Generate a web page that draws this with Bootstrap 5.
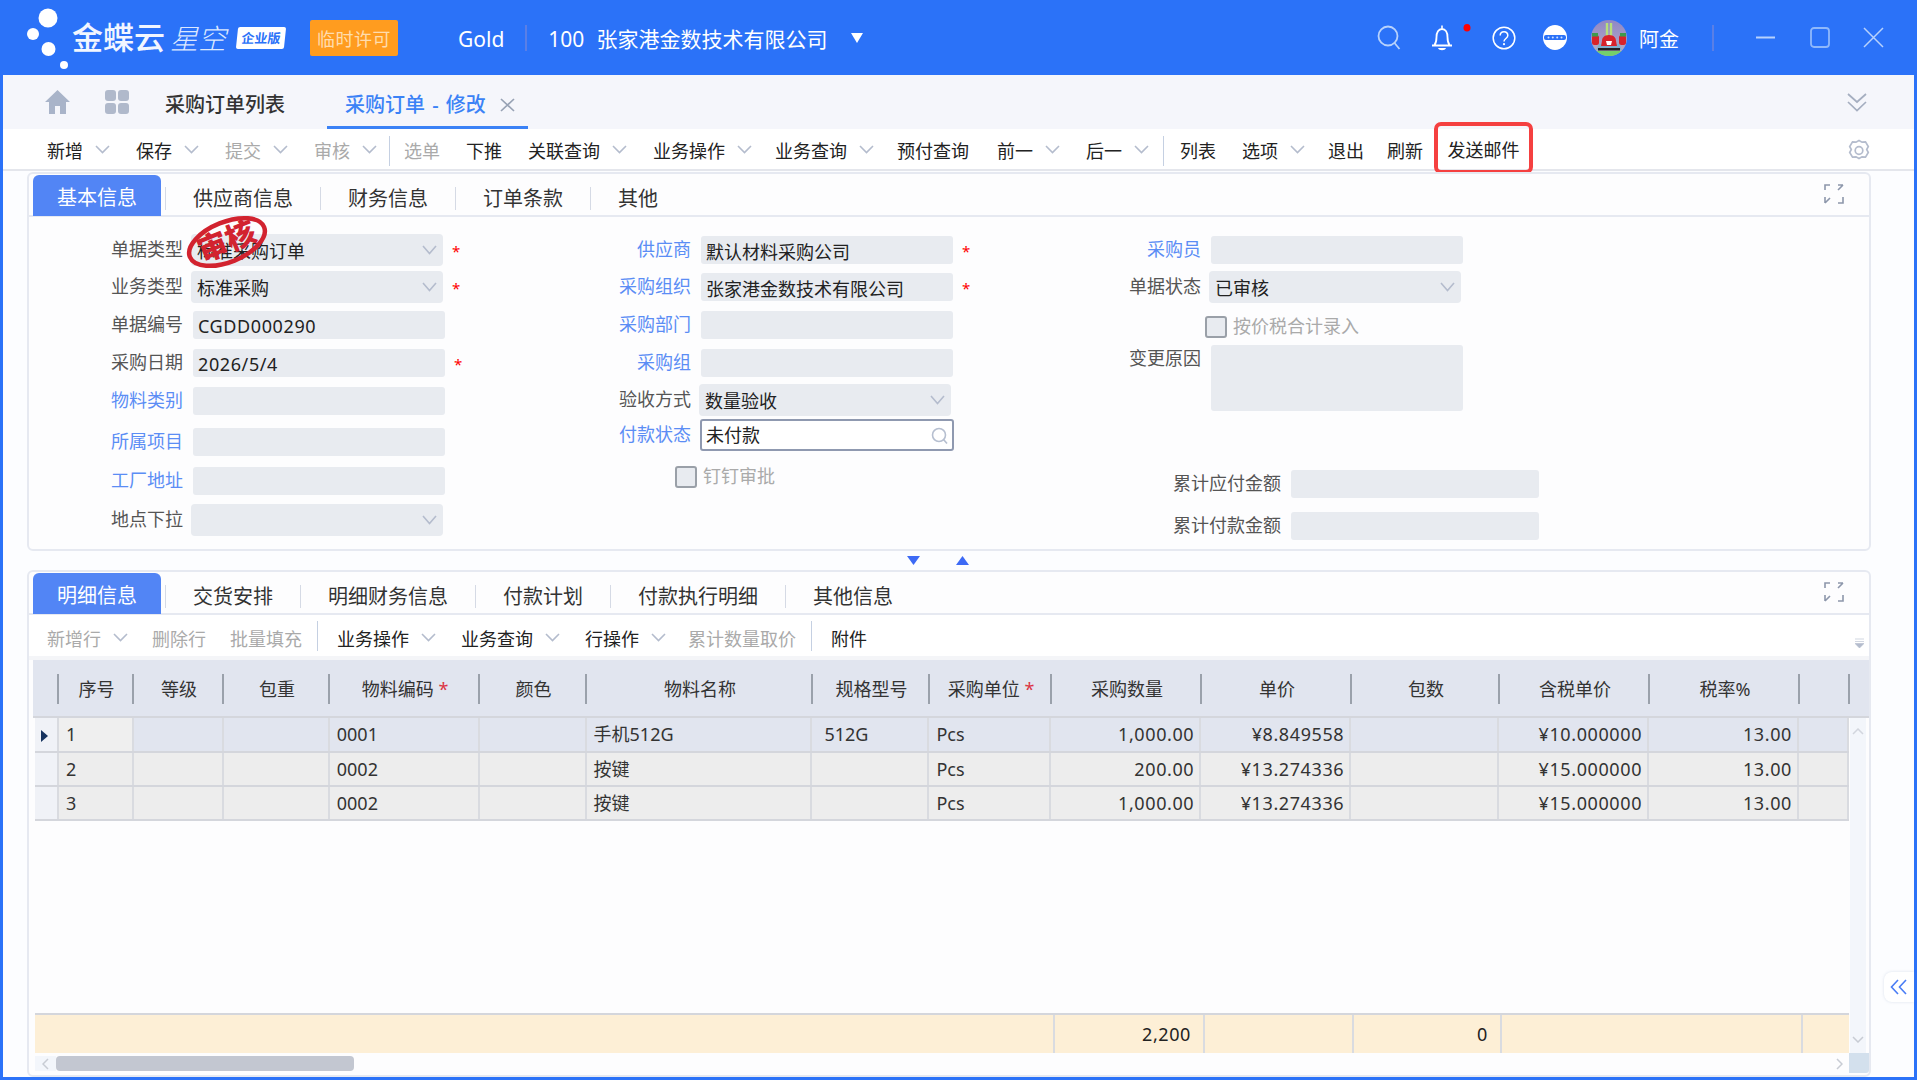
<!DOCTYPE html>
<html lang="zh">
<head>
<meta charset="utf-8">
<title>采购订单 - 修改</title>
<link href="https://cdn.jsdelivr.net/npm/bootstrap@5.3.2/dist/css/bootstrap.min.css" rel="stylesheet">
<style>
  html, body { height: 100%; }
  body { background: #2b72f8; overflow: hidden; font-family: "Noto Sans", "Noto Sans CJK SC", sans-serif; font-size: 18px; color: #333; }

  /* top bar */
  .topbar { height: 75px; color: #fff; font-size: 21px; }
  .logo-dots { flex: none; }
  .brand-a { font-size: 31px; font-weight: 500; line-height: 1; color: #f2f6ff; }
  .brand-b { font-size: 28px; font-weight: 300; font-style: italic; margin-left: 5px; color: #dbe8ff; line-height: 1; }
  .brand-c { width: 48px; height: 22px; margin-left: 11px; background: #fff; color: #2b72f8; font-size: 13px; font-weight: 700; line-height: 22px; text-align: center; transform: skewX(-6deg); border-radius: 2px; }
  .licence { width: 88px; height: 36px; margin-left: 25px; background: #ff9c1f; color: #ffdcae; line-height: 38px; text-align: center; border-radius: 2px; font-size: 18px; letter-spacing: 0.5px; }
  .bar-sep { width: 2px; height: 26px; background: #5a7fe6; }
  .gold { margin-left: 60px; }
  .bar-text { padding-top: 5px; }
  .org-sep { margin: 0 21px; }
  .org-name { margin-left: 12px; }
  .tri-down { width: 0; height: 0; border-left: 6.5px solid transparent; border-right: 6.5px solid transparent; border-top: 10px solid #fff; margin-left: 24px; }
  .ico-bell { margin-left: 29px; }
  .ico-help { margin-left: 20px; }
  .ico-more { margin-left: 27px; }
  .ico-user { margin-left: 24px; }
  .user-name { font-size: 20px; margin-left: 12px; padding-top: 4px; }
  .win-sep { margin-left: 33px; }
  .svg-min { margin-left: 42px; }
  .svg-max { margin-left: 35px; }
  .svg-close { margin-left: 33px; margin-right: 33px; }

  /* main */
  .mainbox { margin: 0 3px; height: 1002px; background: #fcfdff; position: relative; }
  .tabline { height: 54px; background: #f5f6fb; padding-left: 42px; }
  .gap35 { margin-left: 35px; }
  .gap36 { margin-left: 36px; }
  .page-tab { font-size: 20px; font-weight: 500; color: #333; padding-top: 6px; }
  .page-tab-on { width: 201px; height: 54px; margin-left: 42px; color: #3b82f6; border-bottom: 3px solid #3b82f6; padding-left: 18px; padding-top: 8px; word-spacing: 2px; }
  .tab-close { margin-left: 14px; }
  .dbl { margin-right: 47px; }
  .tools { height: 42px; background: #fff; padding-left: 44px; padding-top: 4px; border-bottom: 2px solid #e4e6ec; color: #222; white-space: nowrap; }
  .tool-item { margin-right: 26px; }
  .tool-off { color: #aaa; }
  .chev { width: 15px; height: 9px; margin-left: 12px; margin-bottom: 4px; }
  .tool-sep { width: 1px; height: 30px; background: #c5d0e2; margin-left: -14px; margin-right: 14px; }
  .tool-sep.after-list { margin-left: -12px; margin-right: 16px; }
  .pull3 { margin-right: 23px; }
  .push2 { margin-right: 28px; }
  .mail-wrap { margin-left: -11px; outline: 4px solid #f54040; border-radius: 3px; height: 44px; width: 91px; line-height: 48px; text-align: center; margin-top: -7px; }
  .gear { margin-right: 44px; }

  /* panels */
  .pane { margin-left: 24px; width: 1844px; background: #fdfdfe; border: 2px solid #e6e9f1; border-radius: 6px; }
  .pane-top { height: 379px; position: relative; margin-top: 1px; }
  .pane-low { height: 507px; }
  .pane-head { height: 43px; border-bottom: 2px solid #e6e9f1; padding-left: 4px; font-size: 20px; color: #333; }
  .pane-tab { height: 41px; width: 128px; line-height: 46px; text-align: center; background: #5285f5; color: #fff; border-radius: 6px 6px 0 0; margin-top: 1px; }
  .pane-link { padding: 0 27px; border-left: 1px solid #d5dae5; height: 23px; line-height: 23px; margin-top: 13px; }
  .pane-link.first { margin-left: 4px; }
  .expand { margin-right: 25px; margin-top: 10px; }

  /* form */
  .form-area { padding-left: 1px; }
  .fcol1 { width: 561px; }
  .fcol2 { width: 500px; }
  .field { display: flex; align-items: center; }
  .field.top { align-items: flex-start; }
  .flab { text-align: right; margin-right: 10px; padding-bottom: 2px; color: #555; line-height: 26px; white-space: nowrap; flex: none; }
  .flab.link { color: #5b8df5; }
  .w153 { width: 153px; }
  .w100 { width: 100px; }
  .w110 { width: 110px; }
  .w190 { width: 190px; }
  .finput.form-control { width: 252px; height: 28px; padding: 1px 5px 0; border: 0; border-radius: 3px; background: #e8ebf0; color: #222; font-size: 18px; font-family: inherit; box-shadow: none; }
  .finput.latin { letter-spacing: 0.6px; }
  .finput.tall { height: 66px; resize: none; }
  .finput.w248 { width: 248px; }
  .fselect.form-select { width: 252px; height: 32px; margin-left: -2px; padding: 3px 24px 0 6px; border: 0; border-radius: 4px; color: #222; font-size: 18px; font-family: inherit; box-shadow: none;
    background-color: #e8ebf0; background-size: 15px 10px; background-position: right 6px center;
    background-image: url("data:image/svg+xml,%3Csvg xmlns='http://www.w3.org/2000/svg' viewBox='0 0 15 10'%3E%3Cpath d='M1 1l6.500 7.500L14 1' fill='none' stroke='%23b4bccd' stroke-width='1.600'/%3E%3C/svg%3E"); }
  .fsearch { width: 254px; height: 32px; border: 2px solid #8f99b0; border-radius: 3px; background: #fff; margin-left: -1px; padding: 0 4px; color: #222; }
  .fsearch input { border: 0; outline: 0; background: none; width: 200px; font-size: 18px; color: #222; padding: 0; }
  .req { color: #f00; margin-left: 9px; font-size: 15px; line-height: 1; padding-top: 2px; }
  .fcheck.form-check-input, .fcheck.form-check-input:disabled { width: 22px; height: 22px; margin: 0; background-color: #e8ebf0; border: 2px solid #9aa0a8; border-radius: 3px; flex: none; opacity: 1; }
  .fcheck-text { margin-left: 6px; padding-bottom: 2px; color: #aaa; white-space: nowrap; line-height: 20px; }
  .t3 { margin-top: 3px; } .t5 { margin-top: 5px; } .t7 { margin-top: 7px; } .t8 { margin-top: 8px; }
  .t9 { margin-top: 9px; } .t10 { margin-top: 10px; } .t11 { margin-top: 11px; } .t13 { margin-top: 13px; }
  .t14 { margin-top: 14px; } .t15 { margin-top: 15px; } .t17 { margin-top: 17px; } .t19 { margin-top: 19px; } .t59 { margin-top: 59px; }
  .indent-check { margin-left: 84px; }
  .indent-check3 { margin-left: 114px; }
  .stamp { position: absolute; left: 148px; top: 33px; }
  .splitter { height: 19px; padding-left: 904px; gap: 36px; }

  /* grid */
  .sub-tools { height: 41px; background: #fff; padding-left: 18px; padding-top: 7px; color: #222; white-space: nowrap; }
  .sub-tools .tool-item { margin-right: 24px; }
  .sub-tools .tool-sep { margin-left: -9px; margin-right: 19px; height: 30px; margin-top: -7px; }
  .sub-tools .tool-item.has-chev { margin-right: 25px; }
  .sub-tools .tool-item.narrow { margin-right: 22px; }
  .mini-down { margin-right: 5px; margin-top: 8px; }
  .band { height: 4px; background: #f4f5f8; }
  .grid-wrap { padding-left: 4px; }
  .grid-head { width: 1836px; height: 58px; padding-left: 1px; background: #e1e5ef; border-bottom: 2px solid #d4d6dc; }
  .gtable { table-layout: fixed; border-collapse: collapse; color: #333; }
  .gtable th { height: 56px; padding: 3px 0 0; font-weight: 400; text-align: center; background: linear-gradient(#9aa1ab, #9aa1ab) right 14px / 2px 30px no-repeat; }
  .gtable td { height: 34px; padding: 0 7px; border-right: 2px solid #d9dbe0; border-bottom: 2px solid #d4d6dc; background: #ededed; white-space: nowrap; overflow: hidden; }
  .gtable tr.on td { background: #e1e5ef; }
  .gtable td.side { background: #f0f2f7; padding: 0 0 0 6px; }
  .gtable tr.on td.side { background: #f0f2f7; }
  .gtable tr.on td.seq { background: #efefef; }
  .gtable .num { text-align: right; letter-spacing: 0.6px; padding-right: 5px; }
  .gtable .pad12 { padding-left: 12px; }
  .c0 { width: 25px; } .c0b { width: 23px; } .c1 { width: 75px; } .c2 { width: 90px; } .c3 { width: 106px; } .c4 { width: 150px; }
  .c5 { width: 107px; } .c6 { width: 226px; } .c7 { width: 117px; } .c8 { width: 122px; } .c9 { width: 150px; } .c10 { width: 150px; }
  .c11 { width: 148px; } .c12 { width: 150px; } .c13 { width: 150px; } .c14 { width: 50px; }
  .body-left { width: 1814px; height: 335px; margin-left: 2px; }
  .sum-row { height: 40px; background: #fdefd6; border-top: 2px solid #d4d6dc; }
  .sum-cell { border-left: 2px solid #d9dbe0; text-align: right; padding-right: 12px; line-height: 38px; color: #222; letter-spacing: 0.6px; }
  .w1018 { width: 1018px; } .w150 { width: 150px; } .w149 { width: 149px; } .w148 { width: 148px; } .w301 { width: 301px; }
  .vbar { width: 16px; height: 335px; margin-left: 1px; background: #f3f6fb; padding: 10px 0; }
  .hbar { height: 20px; margin-left: 2px; }
  .hbar-left { width: 21px; height: 15px; margin-top: 3px; background: #f3f6fb; }
  .hbar-thumb { width: 298px; height: 15px; margin-top: 3px; background: #c3c7d1; border-radius: 4px; }
  .hbar-corner { width: 20px; height: 20px; background: #d3e0ed; border-radius: 0 0 3px 0; }
  .hbar-track { width: 1495px; height: 15px; margin-top: 3px; padding-right: 6px; }

  .side-btn { position: absolute; right: 0; top: 897px; width: 30px; height: 30px; background: #fff; border-radius: 8px 0 0 8px; box-shadow: 0 0 3px rgba(120, 140, 180, .25); }
</style>
</head>
<body>
<svg class="d-none">
  <symbol id="ch" viewBox="0 0 15 9"><path d="M1 1l6.500 6.500L14 1" fill="none" stroke="#b4bccd" stroke-width="1.600"/></symbol>
  <symbol id="ex" viewBox="0 0 20 20">
    <path d="M1 6V1h5M14 1h5M19 1l-5 5M1 19l5-5M1 13v6M14 19h5v-6" fill="none" stroke="#8d97ab" stroke-width="1.600"/>
  </symbol>
</svg>

<header class="topbar d-flex align-items-center">
  <svg class="logo-dots" width="72" height="75" viewBox="0 0 72 75">
    <circle cx="48" cy="18" r="9.500" fill="#fff"/><circle cx="33" cy="34" r="6" fill="#fff"/>
    <circle cx="48.500" cy="49" r="7" fill="#fff"/><circle cx="64" cy="65" r="4" fill="#fff"/>
  </svg>
  <span class="brand-a">金蝶云</span>
  <span class="brand-b">星空</span>
  <span class="brand-c">企业版</span>
  <span class="licence">临时许可</span>
  <span class="gold bar-text">Gold</span>
  <span class="bar-sep org-sep"></span>
  <span class="bar-text">100</span>
  <span class="org-name bar-text">张家港金数技术有限公司</span>
  <span class="tri-down"></span>

  <div class="ms-auto d-flex align-items-center">
    <svg width="24" height="26" viewBox="0 0 24 26"><circle cx="11" cy="11" r="9.500" fill="none" stroke="#b8d2fc" stroke-width="1.800"/><path d="M17.500 18l5 6" stroke="#b8d2fc" stroke-width="1.800"/></svg>
    <svg class="ico-bell" width="42" height="28" viewBox="0 0 42 28"><path d="M2 21.500h20M4.500 21c1.500-2 2-4 2-8 0-4.500 2-8 5.500-8s5.500 3.500 5.500 8c0 4 .5 6 2 8" fill="none" stroke="#fff" stroke-width="1.800"/><path d="M12 1.500v3" stroke="#fff" stroke-width="1.600"/><path d="M8 24h8c-1 3-7 3-8 0z" fill="#fff"/><ellipse cx="37" cy="3.800" rx="3.500" ry="3.800" fill="#f00"/></svg>
    <svg class="ico-help" width="24" height="24" viewBox="0 0 24 24"><circle cx="12" cy="12" r="10.800" fill="none" stroke="#fff" stroke-width="1.500"/><path d="M8.200 9.500c0-5 7.600-5 7.600 0 0 3-3.800 3-3.800 6" fill="none" stroke="#fff" stroke-width="1.500"/><circle cx="12" cy="18.200" r="1.100" fill="#fff"/></svg>
    <svg class="ico-more" width="24" height="25" viewBox="0 0 24 25"><ellipse cx="12" cy="12.500" rx="12" ry="12.500" fill="#fff"/><rect x="1" y="10" width="22" height="5" rx="2" fill="#2b72f8"/><g fill="#cfe0ff"><circle cx="5.500" cy="12.500" r="1"/><circle cx="9.800" cy="12.500" r="1"/><circle cx="14.200" cy="12.500" r="1"/><circle cx="18.500" cy="12.500" r="1"/></g></svg>
    <svg class="ico-user" width="36" height="36" viewBox="0 0 36 36">
      <defs><clipPath id="av"><circle cx="18" cy="18" r="18"/></clipPath><linearGradient id="avbg" x1="0" y1="0" x2="0" y2="1"><stop offset="0" stop-color="#8f86c6"/><stop offset="1" stop-color="#b8b0c4"/></linearGradient></defs>
      <g clip-path="url(#av)">
        <rect width="36" height="36" fill="url(#avbg)"/>
        <rect y="31" width="36" height="5" fill="#74cf6c"/>
        <path d="M5 30h26l-3-6H8z" fill="#7faecb"/>
        <rect x="7" y="28" width="22" height="2.500" fill="#222"/>
        <path d="M16 3v14M20 3v14" stroke="#b7df7a" stroke-width="2.400"/>
        <path d="M18 15c-5 0-7 3-7 6l-1 5h16l-1-5c0-3-2-6-7-6z" fill="#d8232a"/>
        <path d="M15 21h6l-1 4h-4z" fill="#fff"/>
        <rect x="1" y="15" width="7" height="10" rx="2.500" fill="#d8232a"/><rect x="28" y="15" width="7" height="10" rx="2.500" fill="#d8232a"/>
        <rect x="1" y="13" width="6" height="3.500" fill="#3d9b4d"/><rect x="29" y="13" width="6" height="3.500" fill="#3d9b4d"/>
      </g>
    </svg>
    <span class="user-name">阿金</span>
    <span class="bar-sep win-sep"></span>
    <svg class="svg-min" width="19" height="3" viewBox="0 0 19 3"><rect width="19" height="2" y="0.500" fill="#b8d2fc"/></svg>
    <svg class="svg-max" width="20" height="21" viewBox="0 0 20 21"><rect x="1" y="1" width="18" height="19" rx="3" fill="none" stroke="#8fb8fb" stroke-width="1.800"/></svg>
    <svg class="svg-close" width="21" height="21" viewBox="0 0 21 21"><path d="M1 1l19 19M20 1L1 20" stroke="#b8d2fc" stroke-width="1.500"/></svg>
  </div>
</header>

<main class="mainbox">
  <div class="tabline d-flex align-items-center">
    <svg width="25" height="24" viewBox="0 0 25 24"><path d="M12.500 0L25 12h-4v12h-6v-8h-5v8H4V12H0z" fill="#a9b4c9"/></svg>
    <svg class="gap35" width="24" height="24" viewBox="0 0 24 24" fill="#b0b9cb"><rect width="11" height="11" rx="3"/><rect x="13" width="11" height="11" rx="3"/><rect y="13" width="11" height="11" rx="3"/><rect x="13" y="13" width="11" height="11" rx="3"/></svg>
    <span class="page-tab gap36">采购订单列表</span>
    <div class="page-tab page-tab-on d-flex align-items-center">
      <span>采购订单 - 修改</span>
      <svg class="tab-close" width="15" height="14" viewBox="0 0 15 14"><path d="M1 1l13 12M14 1L1 13" stroke="#97a2b4" stroke-width="1.700"/></svg>
    </div>
    <svg class="ms-auto dbl" width="20" height="19" viewBox="0 0 20 19"><path d="M1 1l9 8 9-8M1 9l9 8.500L19 9" fill="none" stroke="#a5aec0" stroke-width="1.700"/></svg>
  </div>

  <div class="tools d-flex align-items-center">
    <span class="tool-item d-flex align-items-center">新增<svg class="chev"><use href="#ch"/></svg></span>
    <span class="tool-item d-flex align-items-center">保存<svg class="chev"><use href="#ch"/></svg></span>
    <span class="tool-item tool-off d-flex align-items-center">提交<svg class="chev"><use href="#ch"/></svg></span>
    <span class="tool-item tool-off d-flex align-items-center">审核<svg class="chev"><use href="#ch"/></svg></span>
    <span class="tool-sep"></span>
    <span class="tool-item tool-off">选单</span>
    <span class="tool-item">下推</span>
    <span class="tool-item d-flex align-items-center">关联查询<svg class="chev"><use href="#ch"/></svg></span>
    <span class="tool-item pull3 d-flex align-items-center">业务操作<svg class="chev"><use href="#ch"/></svg></span>
    <span class="tool-item pull3 d-flex align-items-center">业务查询<svg class="chev"><use href="#ch"/></svg></span>
    <span class="tool-item push2">预付查询</span>
    <span class="tool-item d-flex align-items-center">前一<svg class="chev"><use href="#ch"/></svg></span>
    <span class="tool-item d-flex align-items-center">后一<svg class="chev"><use href="#ch"/></svg></span>
    <span class="tool-sep after-list"></span>
    <span class="tool-item">列表</span>
    <span class="tool-item pull3 d-flex align-items-center">选项<svg class="chev"><use href="#ch"/></svg></span>
    <span class="tool-item pull3">退出</span>
    <span class="tool-item">刷新</span>
    <span class="mail-wrap">发送邮件</span>
    <svg class="ms-auto gear" width="22" height="24" viewBox="0 0 22 24"><path d="M11 1.500l3 1.700 3.500-.4 2.800 4.700-1.600 3 1.600 3-2.800 4.700-3.500-.4-3 1.700-3-1.700-3.500.4-2.800-4.700 1.600-3-1.600-3 2.800-4.700 3.500.4z" fill="none" stroke="#b4bccd" stroke-width="1.700"/><circle cx="11" cy="11.500" r="3.800" fill="none" stroke="#b4bccd" stroke-width="1.700"/></svg>
  </div>

  <section class="pane pane-top">
    <div class="pane-head d-flex">
      <div class="pane-tab">基本信息</div>
      <div class="pane-link first">供应商信息</div>
      <div class="pane-link">财务信息</div>
      <div class="pane-link">订单条款</div>
      <div class="pane-link">其他</div>
      <svg class="ms-auto expand" width="20" height="20"><use href="#ex"/></svg>
    </div>
    <div class="d-flex form-area">
      <div class="fcol1">
        <div class="field t17"><label class="flab w153">单据类型</label><select class="fselect form-select"><option>标准采购订单</option></select><span class="req">*</span></div>
        <div class="field t5"><label class="flab w153">业务类型</label><select class="fselect form-select"><option>标准采购</option></select><span class="req">*</span></div>
        <div class="field t8"><label class="flab w153">单据编号</label><input class="finput latin form-control" value="CGDD000290" readonly></div>
        <div class="field t10"><label class="flab w153">采购日期</label><input class="finput latin form-control" value="2026/5/4" readonly><span class="req">*</span></div>
        <div class="field t10"><label class="flab link w153">物料类别</label><input class="finput form-control" readonly></div>
        <div class="field t13"><label class="flab link w153">所属项目</label><input class="finput form-control" readonly></div>
        <div class="field t11"><label class="flab link w153">工厂地址</label><input class="finput form-control" readonly></div>
        <div class="field t9"><label class="flab w153">地点下拉</label><select class="fselect form-select"><option></option></select></div>
      </div>
      <div class="fcol2">
        <div class="field t19"><label class="flab link w100">供应商</label><input class="finput form-control" value="默认材料采购公司" readonly><span class="req">*</span></div>
        <div class="field t9"><label class="flab link w100">采购组织</label><input class="finput form-control" value="张家港金数技术有限公司" readonly><span class="req">*</span></div>
        <div class="field t10"><label class="flab link w100">采购部门</label><input class="finput form-control" readonly></div>
        <div class="field t10"><label class="flab link w100">采购组</label><input class="finput form-control" readonly></div>
        <div class="field t7"><label class="flab w100">验收方式</label><select class="fselect form-select"><option>数量验收</option></select></div>
        <div class="field t3"><label class="flab link w100">付款状态</label>
          <div class="fsearch d-flex align-items-center"><input value="未付款" readonly>
            <svg class="ms-auto" width="17" height="17" viewBox="0 0 17 17"><circle cx="8" cy="8" r="6.500" fill="none" stroke="#b6bfd0" stroke-width="1.600"/><path d="M12.500 12.500l3.500 4" stroke="#b6bfd0" stroke-width="1.600"/></svg>
          </div>
        </div>
        <div class="field t15 indent-check"><input class="fcheck form-check-input" type="checkbox" disabled><span class="fcheck-text">钉钉审批</span></div>
      </div>
      <div>
        <div class="field t19"><label class="flab link w110">采购员</label><input class="finput form-control" readonly></div>
        <div class="field t7"><label class="flab w110">单据状态</label><select class="fselect form-select"><option>已审核</option></select></div>
        <div class="field t13 indent-check3"><input class="fcheck form-check-input" type="checkbox" disabled><span class="fcheck-text">按价税合计录入</span></div>
        <div class="field top t7"><label class="flab w110">变更原因</label><textarea class="finput tall form-control" readonly></textarea></div>
        <div class="field t59"><label class="flab w190">累计应付金额</label><input class="finput w248 form-control" readonly></div>
        <div class="field t14"><label class="flab w190">累计付款金额</label><input class="finput w248 form-control" readonly></div>
      </div>
    </div>
    <svg class="stamp" width="100" height="70" viewBox="0 0 100 70">
      <g transform="rotate(-22 50 35)">
        <ellipse cx="50" cy="35" rx="40" ry="20" fill="none" stroke="#d2232f" stroke-width="4.500"/>
        <text x="50" y="45" text-anchor="middle" font-family="Noto Sans CJK SC" font-size="30" font-weight="900" fill="#d2232f">审核</text>
      </g>
    </svg>
  </section>

  <div class="splitter d-flex align-items-center">
    <svg width="13" height="9" viewBox="0 0 13 9"><path d="M0 0h13L6.500 9z" fill="#3d6af5"/></svg>
    <svg width="13" height="9" viewBox="0 0 13 9"><path d="M0 9h13L6.500 0z" fill="#3d6af5"/></svg>
  </div>

  <section class="pane pane-low">
    <div class="pane-head d-flex">
      <div class="pane-tab">明细信息</div>
      <div class="pane-link first">交货安排</div>
      <div class="pane-link">明细财务信息</div>
      <div class="pane-link">付款计划</div>
      <div class="pane-link">付款执行明细</div>
      <div class="pane-link">其他信息</div>
      <svg class="ms-auto expand" width="20" height="20"><use href="#ex"/></svg>
    </div>
    <div class="sub-tools d-flex align-items-center">
      <span class="tool-item tool-off d-flex align-items-center">新增行<svg class="chev"><use href="#ch"/></svg></span>
      <span class="tool-item tool-off">删除行</span>
      <span class="tool-item tool-off">批量填充</span>
      <span class="tool-sep"></span>
      <span class="tool-item has-chev d-flex align-items-center">业务操作<svg class="chev"><use href="#ch"/></svg></span>
      <span class="tool-item has-chev d-flex align-items-center">业务查询<svg class="chev"><use href="#ch"/></svg></span>
      <span class="tool-item narrow d-flex align-items-center">行操作<svg class="chev"><use href="#ch"/></svg></span>
      <span class="tool-item tool-off">累计数量取价</span>
      <span class="tool-sep"></span>
      <span class="tool-item">附件</span>
      <svg class="ms-auto mini-down" width="9" height="10" viewBox="0 0 9 10"><path d="M0 1h9M0 3.500h9M0 5.500h9L4.500 10z" fill="#b4bccd" stroke="#b4bccd" stroke-width=".6"/></svg>
    </div>
    <div class="band"></div>
    <div class="grid-wrap">
      <div class="grid-head">
        <table class="gtable">
          <colgroup><col class="c0"><col class="c1"><col class="c2"><col class="c3"><col class="c4"><col class="c5"><col class="c6"><col class="c7"><col class="c8"><col class="c9"><col class="c10"><col class="c11"><col class="c12"><col class="c13"><col class="c14"></colgroup>
          <tr>
            <th></th><th>序号</th><th>等级</th><th>包重</th><th>物料编码 <span class="text-danger">*</span></th><th>颜色</th><th>物料名称</th><th>规格型号</th><th>采购单位 <span class="text-danger">*</span></th><th>采购数量</th><th>单价</th><th>包数</th><th>含税单价</th><th>税率%</th><th></th>
          </tr>
        </table>
      </div>
      <div class="d-flex">
        <div class="body-left d-flex flex-column">
          <table class="gtable">
            <colgroup><col class="c0b"><col class="c1"><col class="c2"><col class="c3"><col class="c4"><col class="c5"><col class="c6"><col class="c7"><col class="c8"><col class="c9"><col class="c10"><col class="c11"><col class="c12"><col class="c13"><col class="c14"></colgroup>
            <tr class="on">
              <td class="side"><svg width="7" height="12" viewBox="0 0 7 12"><path d="M0 0l7 6-7 6z" fill="#16335f"/></svg></td><td class="seq">1</td><td></td><td></td><td>0001</td><td></td><td>手机512G</td><td class="pad12">512G</td><td>Pcs</td><td class="num">1,000.00</td><td class="num">¥8.849558</td><td></td><td class="num">¥10.000000</td><td class="num">13.00</td><td></td>
            </tr>
            <tr>
              <td class="side"></td><td class="seq">2</td><td></td><td></td><td>0002</td><td></td><td>按键</td><td></td><td>Pcs</td><td class="num">200.00</td><td class="num">¥13.274336</td><td></td><td class="num">¥15.000000</td><td class="num">13.00</td><td></td>
            </tr>
            <tr>
              <td class="side"></td><td class="seq">3</td><td></td><td></td><td>0002</td><td></td><td>按键</td><td></td><td>Pcs</td><td class="num">1,000.00</td><td class="num">¥13.274336</td><td></td><td class="num">¥15.000000</td><td class="num">13.00</td><td></td>
            </tr>
          </table>
          <div class="sum-row d-flex mt-auto">
            <div class="w1018"></div>
            <div class="sum-cell w150">2,200</div>
            <div class="sum-cell w149"></div>
            <div class="sum-cell w148">0</div>
            <div class="sum-cell w301"></div>
            <div class="sum-cell flex-grow-1"></div>
          </div>
        </div>
        <div class="vbar d-flex flex-column align-items-center justify-content-between">
          <svg width="12" height="7" viewBox="0 0 12 7"><path d="M1 6l5-5 5 5" fill="none" stroke="#d2d6de" stroke-width="1.500"/></svg>
          <svg width="12" height="7" viewBox="0 0 12 7"><path d="M1 1l5 5 5-5" fill="none" stroke="#c8ccd4" stroke-width="1.500"/></svg>
        </div>
      </div>
      <div class="hbar d-flex">
        <div class="hbar-left d-flex align-items-center justify-content-center"><svg width="7" height="12" viewBox="0 0 7 12"><path d="M6 1L1 6l5 5" fill="none" stroke="#c8ccd4" stroke-width="1.500"/></svg></div>
        <div class="hbar-thumb"></div>
        <div class="hbar-track d-flex align-items-center justify-content-end"><svg width="7" height="12" viewBox="0 0 7 12"><path d="M1 1l5 5-5 5" fill="none" stroke="#c8ccd4" stroke-width="1.500"/></svg></div>
        <div class="hbar-corner"></div>
      </div>
    </div>
  </section>

  <div class="side-btn d-flex align-items-center justify-content-center">
    <svg width="18" height="16" viewBox="0 0 18 16"><path d="M8 1L1.500 8 8 15M16 1L9.500 8l6.500 7" fill="none" stroke="#4a7df5" stroke-width="1.600"/></svg>
  </div>
</main>
<script src="https://cdn.jsdelivr.net/npm/bootstrap@5.3.2/dist/js/bootstrap.bundle.min.js"></script>
</body>
</html>
